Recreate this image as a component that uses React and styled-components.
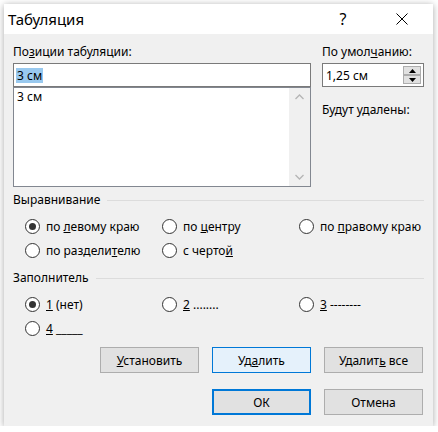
import React from "react";
import styled, { createGlobalStyle } from "styled-components";

const GlobalStyle = createGlobalStyle`
  html, body {
    margin: 0;
    padding: 0;
    background: #ffffff;
  }
  body {
    font-family: "Noto Sans", "Liberation Sans", sans-serif;
    font-size: 12px;
    color: #000;
  }
`;

const Window = styled.div`
  margin: 4px 0 0 4px;
  width: 429px;
  height: 422px;
  background: #f0f0f0;
  box-shadow: 0 1px 7px rgba(0, 0, 0, 0.35);
  display: flex;
  flex-direction: column;
  box-sizing: border-box;
`;

const TitleBar = styled.div`
  height: 30px;
  background: #ffffff;
  display: flex;
  align-items: center;
  padding-left: 4px;
`;

const Title = styled.div`
  font-size: 15px;
  flex: 1;
`;

const TitleButton = styled.div`
  width: 46px;
  height: 30px;
  display: flex;
  align-items: center;
  justify-content: center;
  font-size: 16px;
  margin-right: ${(p) => p.$gap || 0}px;
`;

const Body = styled.div`
  padding: 10px 9px 0 9px;
  display: flex;
  flex-direction: column;
`;

const Top = styled.div`
  display: flex;
  gap: 11px;
`;

const Column = styled.div`
  width: ${(p) => p.$width}px;
  display: flex;
  flex-direction: column;
`;

const Label = styled.div`
  line-height: 16px;
  height: 16px;
  margin-bottom: 3px;
  margin-top: ${(p) => p.$top || 0}px;
  white-space: nowrap;
`;

const Key = styled.span`
  text-decoration: underline;
`;

const TextInput = styled.div`
  height: 24px;
  box-sizing: border-box;
  border: 1px solid #7a7a7a;
  background: #fff;
  display: flex;
  align-items: center;
  padding-left: 2px;
`;

const Selected = styled.span`
  background: #99c9ef;
  line-height: 15px;
  padding: 0 1px;
`;

const ListBox = styled.div`
  height: 100px;
  box-sizing: border-box;
  border: 1px solid #828790;
  background: #fff;
  display: flex;
`;

const ListItems = styled.div`
  flex: 1;
  padding: 1px 3px;
  line-height: 16px;
`;

const ScrollBar = styled.div`
  width: 21px;
  background: #f0f0f0;
  display: flex;
  flex-direction: column;
  justify-content: space-between;
  align-items: center;
  padding: 6px 0;
`;

const SpinBox = styled.div`
  height: 24px;
  box-sizing: border-box;
  border: 1px solid #7a7a7a;
  background: #fff;
  display: flex;
  align-items: center;
  padding-left: 3px;
`;

const SpinText = styled.div`
  flex: 1;
`;

const SpinButtons = styled.div`
  display: flex;
  flex-direction: column;
  margin-right: 2px;
`;

const SpinButton = styled.div`
  width: 18px;
  height: 9px;
  box-sizing: border-box;
  border: 1px solid #adadad;
  background: #e1e1e1;
  display: flex;
  align-items: center;
  justify-content: center;
`;

const GroupHeading = styled.div`
  display: flex;
  align-items: center;
  height: 16px;
  line-height: 16px;
  margin-top: ${(p) => p.$top}px;
  &::after {
    content: "";
    flex: 1;
    height: 1px;
    background: #dcdcdc;
    margin-left: 7px;
  }
`;

const RadioGrid = styled.div`
  display: grid;
  grid-template-columns: 137px 137px 137px;
  grid-auto-rows: 24px;
  padding-left: 12px;
  margin-top: 6px;
`;

const RadioItem = styled.label`
  display: flex;
  align-items: center;
  white-space: nowrap;
`;

const RadioCircle = styled.span`
  width: 15px;
  height: 15px;
  box-sizing: border-box;
  border-radius: 50%;
  border: 1px solid #333;
  background: #fff;
  margin-right: 6px;
  position: relative;
  &::after {
    content: "";
    display: ${(p) => (p.$checked ? "block" : "none")};
    position: absolute;
    left: 3px;
    top: 3px;
    width: 7px;
    height: 7px;
    border-radius: 50%;
    background: #333;
  }
`;

const ButtonRow = styled.div`
  display: flex;
  justify-content: flex-end;
  gap: 13px;
  margin-right: 1px;
  margin-top: ${(p) => p.$top}px;
`;

const Button = styled.div`
  width: 99px;
  height: 26px;
  box-sizing: border-box;
  border: ${(p) => (p.$default ? "2px solid #0078d7" : p.$hot ? "1px solid #0078d7" : "1px solid #adadad")};
  background: ${(p) => (p.$hot ? "#e5f1fb" : "#e1e1e1")};
  display: flex;
  align-items: center;
  justify-content: center;
`;

const Radio = ({ checked, children }) => (
  <RadioItem>
    <RadioCircle $checked={checked} />
    <span>{children}</span>
  </RadioItem>
);

const Chevron = ({ up }) => (
  <svg width="9" height="6" viewBox="0 0 9 6">
    <path
      d={up ? "M0.5 5 L4.5 1 L8.5 5" : "M0.5 1 L4.5 5 L8.5 1"}
      fill="none"
      stroke="#b5b5b5"
      strokeWidth="1.3"
    />
  </svg>
);

const Triangle = ({ up }) => (
  <svg width="7" height="4" viewBox="0 0 7 4">
    <path d={up ? "M0 4 L3.5 0 L7 4 Z" : "M0 0 L3.5 4 L7 0 Z"} fill="#000" />
  </svg>
);

export default function App() {
  return (
    <>
      <GlobalStyle />
      <Window>
        <TitleBar>
          <Title>Табуляция</Title>
          <TitleButton $gap={13}>?</TitleButton>
          <TitleButton $gap={8}>
            <svg width="12" height="12" viewBox="0 0 12 12">
              <path d="M0.5 0.5 L11.5 11.5 M11.5 0.5 L0.5 11.5" stroke="#000" strokeWidth="1" />
            </svg>
          </TitleButton>
        </TitleBar>
        <Body>
          <Top>
            <Column $width={298}>
              <Label>
                По<Key>з</Key>иции табуляции:
              </Label>
              <TextInput>
                <Selected>3 см</Selected>
              </TextInput>
              <ListBox>
                <ListItems>3 см</ListItems>
                <ScrollBar>
                  <Chevron up />
                  <Chevron />
                </ScrollBar>
              </ListBox>
            </Column>
            <Column $width={102}>
              <Label>
                По умол<Key>ч</Key>анию:
              </Label>
              <SpinBox>
                <SpinText>1,25 см</SpinText>
                <SpinButtons>
                  <SpinButton>
                    <Triangle up />
                  </SpinButton>
                  <SpinButton>
                    <Triangle />
                  </SpinButton>
                </SpinButtons>
              </SpinBox>
              <Label $top={15}>Будут удалены:</Label>
            </Column>
          </Top>

          <GroupHeading $top={5}>Выравнивание</GroupHeading>
          <RadioGrid>
            <Radio checked>
              по <Key>л</Key>евому краю
            </Radio>
            <Radio>
              по <Key>ц</Key>ентру
            </Radio>
            <Radio>
              по <Key>п</Key>равому краю
            </Radio>
            <Radio>
              по раздели<Key>т</Key>елю
            </Radio>
            <Radio>
              с черто<Key>й</Key>
            </Radio>
          </RadioGrid>

          <GroupHeading $top={8}>Заполнитель</GroupHeading>
          <RadioGrid>
            <Radio checked>
              <Key>1</Key> (нет)
            </Radio>
            <Radio>
              <Key>2</Key> ........
            </Radio>
            <Radio>
              <Key>3</Key> --------
            </Radio>
            <Radio>
              <Key>4</Key> _____
            </Radio>
          </RadioGrid>

          <ButtonRow $top={7}>
            <Button>
              <span>
                <Key>У</Key>становить
              </span>
            </Button>
            <Button $hot>
              <span>
                Уд<Key>а</Key>лить
              </span>
            </Button>
            <Button>
              <span>
                Удалит<Key>ь</Key> все
              </span>
            </Button>
          </ButtonRow>
          <ButtonRow $top={16}>
            <Button $default>ОК</Button>
            <Button>Отмена</Button>
          </ButtonRow>
        </Body>
      </Window>
    </>
  );
}
